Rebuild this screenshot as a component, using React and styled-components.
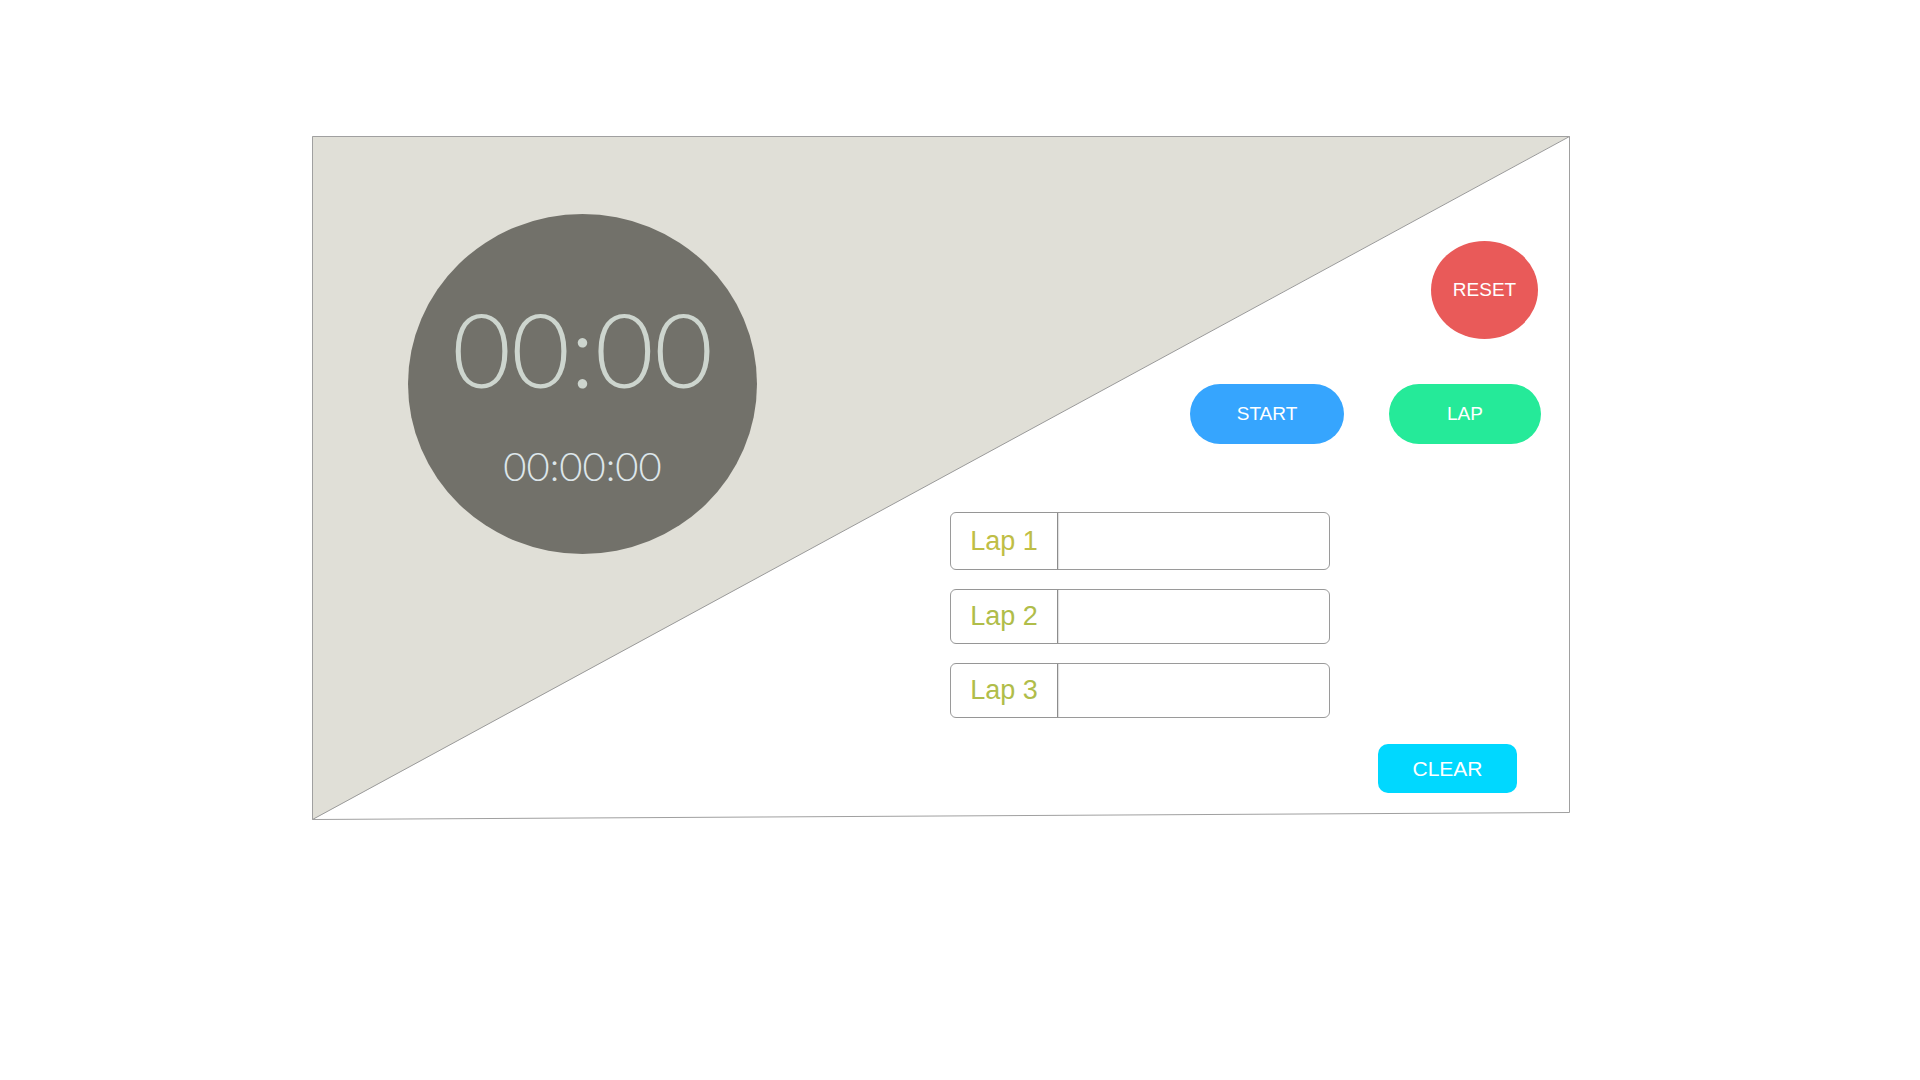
import React from "react";
import styled, { createGlobalStyle } from "styled-components";

const GlobalStyle = createGlobalStyle`
  html, body {
    margin: 0;
    padding: 0;
    background: #ffffff;
    font-family: "Liberation Sans", Arial, sans-serif;
  }
`;

const Page = styled.div`
  width: 1920px;
  height: 1080px;
  padding: 136px 0 0 312px;
  box-sizing: border-box;
`;

const Card = styled.div`
  position: relative;
  width: 1258px;
  height: 684px;
  display: flex;
  box-sizing: border-box;
`;

const Backdrop = styled.svg`
  position: absolute;
  inset: 0;
  width: 100%;
  height: 100%;
  pointer-events: none;
`;

const ClockSide = styled.div`
  position: relative;
  padding: 78px 0 0 96px;
`;

const Dial = styled.div`
  width: 349px;
  height: 340px;
  border-radius: 50%;
  background: #72716a;
  display: flex;
  flex-direction: column;
  align-items: center;
  padding-top: 84px;
  box-sizing: border-box;
  font-family: Lato, Inter, "Liberation Sans", sans-serif;
`;

const BigTime = styled.div`
  font-size: 102px;
  font-weight: 300;
  line-height: 1;
  color: #cdd5ce;
`;

const SmallTime = styled.div`
  margin-top: 46px;
  font-size: 40px;
  font-weight: 300;
  line-height: 1;
  color: #dde6ea;
`;

const Controls = styled.div`
  position: relative;
  margin-left: 193px;
  width: 591px;
  display: flex;
  flex-direction: column;
`;

const Row = styled.div`
  display: flex;
  justify-content: flex-end;
  gap: ${(p) => p.$gap || 0}px;
  margin-top: ${(p) => p.$top}px;
  padding-right: ${(p) => p.$right || 0}px;
`;

const Button = styled.button`
  border: none;
  padding: 0;
  color: #ffffff;
  font-family: "Liberation Sans", Arial, sans-serif;
  font-size: ${(p) => p.$size || 19}px;
  width: ${(p) => p.$w}px;
  height: ${(p) => p.$h}px;
  border-radius: ${(p) => p.$radius};
  background: ${(p) => p.$color};
  display: flex;
  align-items: center;
  justify-content: center;
  cursor: pointer;
`;

const LapList = styled.div`
  margin-top: 68px;
  display: flex;
  flex-direction: column;
  gap: 19px;
  width: 380px;
`;

const LapRow = styled.div`
  display: flex;
  height: ${(p) => p.$h}px;
  border: 1px solid #9a9a9a;
  border-radius: 6px;
  box-sizing: border-box;
  background: #ffffff;
`;

const LapLabel = styled.div`
  width: 106px;
  border-right: 1px solid #8c8c8c;
  box-shadow: 1px 0 1px rgba(0, 0, 0, 0.12);
  display: flex;
  align-items: center;
  justify-content: center;
  font-size: 27px;
  color: ${(p) => p.$color};
`;

const LapValue = styled.div`
  flex: 1;
`;

const laps = [
  { label: "Lap 1", h: 58, color: "#bfbe46" },
  { label: "Lap 2", h: 55, color: "#b0bd4a" },
  { label: "Lap 3", h: 55, color: "#b0bd4a" },
];

export default function App() {
  return (
    <>
      <GlobalStyle />
      <Page>
        <Card>
          <Backdrop viewBox="0 0 1258 684" preserveAspectRatio="none">
            <polygon points="0,0 1258,0 0,684" fill="#e0dfd7" />
            <line x1="0.5" y1="683.5" x2="1257.5" y2="0.5" stroke="#9a9a9a" strokeWidth="1" />
            <polygon
              points="0.5,0.5 1257.5,0.5 1257.5,676.5 0.5,683.5"
              fill="none"
              stroke="#a0a0a0"
              strokeWidth="1"
            />
          </Backdrop>

          <ClockSide>
            <Dial>
              <BigTime>00:00</BigTime>
              <SmallTime>00:00:00</SmallTime>
            </Dial>
          </ClockSide>

          <Controls>
            <Row $top={105} $right={3}>
              <Button $w={107} $h={98} $radius="50%" $color="#e95a59">
                RESET
              </Button>
            </Row>
            <Row $top={45} $gap={45}>
              <Button $w={154} $h={60} $radius="30px" $color="#36a5fe">
                START
              </Button>
              <Button $w={152} $h={60} $radius="30px" $color="#25ea99">
                LAP
              </Button>
            </Row>
            <LapList>
              {laps.map((lap) => (
                <LapRow key={lap.label} $h={lap.h}>
                  <LapLabel $color={lap.color}>{lap.label}</LapLabel>
                  <LapValue />
                </LapRow>
              ))}
            </LapList>
            <Row $top={26} $right={24}>
              <Button $w={139} $h={49} $radius="10px" $color="#00d8ff" $size={21}>
                CLEAR
              </Button>
            </Row>
          </Controls>
        </Card>
      </Page>
    </>
  );
}
